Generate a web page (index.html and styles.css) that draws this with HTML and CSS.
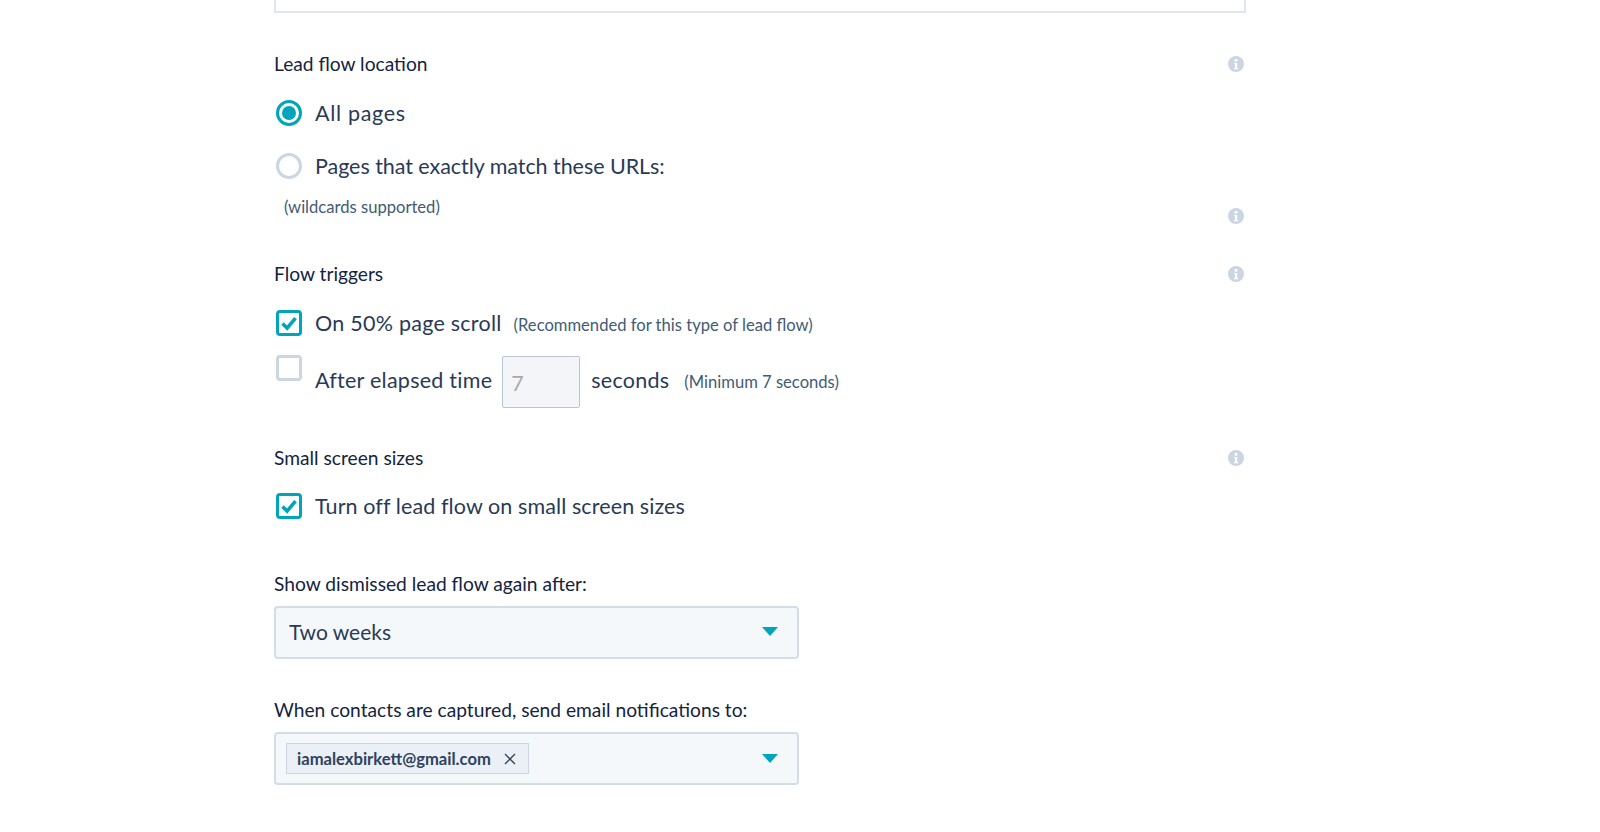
FILE: index.html
```html
<!DOCTYPE html>
<html lang="en">
<head>
  <meta charset="UTF-8">
  <title>Lead flow options</title>
  <link rel="stylesheet" href="styles.css">
</head>
<body>

<svg width="0" height="0" class="defs">
  <symbol id="info" viewBox="0 0 16 16">
    <circle cx="8" cy="8" r="8" fill="#cbd6e2"/>
    <circle cx="8" cy="4.2" r="1.5" fill="#fff"/>
    <path d="M6 6.9h3.2v5h1v1.3H6v-1.3h1v-3.7H6z" fill="#fff"/>
  </symbol>
  <symbol id="tick" viewBox="0 0 26 26">
    <path d="M6.5 13.5l4.6 4.6 8.4-10" fill="none" stroke="#00a4bd" stroke-width="3.6"/>
  </symbol>
  <symbol id="caret" viewBox="0 0 16 9">
    <path d="M0 0h16L8 9z" fill="#00a4bd"/>
  </symbol>
</svg>

<div class="form">
  <div class="top-box"></div>

  <section class="group location">
    <div class="group-head">
      <span class="label">Lead flow location</span>
      <svg class="info"><use href="#info"/></svg>
    </div>
    <div class="option first">
      <span class="radio checked"></span>
      <span class="option-text">All pages</span>
    </div>
    <div class="option second">
      <span class="radio"></span>
      <span class="option-text">Pages that exactly match these URLs:</span>
    </div>
    <div class="group-head wild">
      <span class="hint">(wildcards supported)</span>
      <svg class="info"><use href="#info"/></svg>
    </div>
  </section>

  <section class="group triggers">
    <div class="group-head">
      <span class="label">Flow triggers</span>
      <svg class="info"><use href="#info"/></svg>
    </div>
    <div class="option first">
      <span class="check checked"><svg><use href="#tick"/></svg></span>
      <span class="option-text">On 50% page scroll</span>
      <span class="hint rec">(Recommended for this type of lead flow)</span>
    </div>
    <div class="option elapsed">
      <span class="check"></span>
      <span class="option-text">After elapsed time</span>
      <span class="num-input">7</span>
      <span class="option-text seconds">seconds</span>
      <span class="hint min">(Minimum 7 seconds)</span>
    </div>
  </section>

  <section class="group small-screens">
    <div class="group-head">
      <span class="label">Small screen sizes</span>
      <svg class="info"><use href="#info"/></svg>
    </div>
    <div class="option first">
      <span class="check checked"><svg><use href="#tick"/></svg></span>
      <span class="option-text">Turn off lead flow on small screen sizes</span>
    </div>
  </section>

  <section class="group dismissed">
    <div class="label">Show dismissed lead flow again after:</div>
    <div class="select">
      <span class="select-value">Two weeks</span>
      <svg class="caret"><use href="#caret"/></svg>
    </div>
  </section>

  <section class="group notify">
    <div class="label">When contacts are captured, send email notifications to:</div>
    <div class="select tags">
      <span class="tag">iamalexbirkett@gmail.com
        <svg class="tag-x" viewBox="0 0 12 12"><path d="M1 1l10 10M11 1L1 11" stroke="#33475b" stroke-width="1.4" fill="none"/></svg>
      </span>
      <svg class="caret"><use href="#caret"/></svg>
    </div>
  </section>
</div>

</body>
</html>
```
FILE: styles.css
```css
body {
    margin: 0;
    background-color: #fff;
    color: #33475b;
    font-family: Lato, "Open Sans", sans-serif;
    overflow: hidden;
}
.defs {
    position: absolute;
}
.form {
    width: 972px;
    margin-left: 274px;
}
.top-box {
    height: 13px;
    box-sizing: border-box;
    border: 2px solid #e1e5ee;
    border-top: 0;
}
.group-head {
    display: flex;
    justify-content: space-between;
    align-items: center;
    padding-right: 2px;
    height: 24px;
}
.label {
    font-size: 19.2px;
    font-weight: 400;
    line-height: 24px;
    color: #14233f;
}
.info {
    width: 16px;
    height: 16px;
}
.option {
    display: flex;
    align-items: center;
    height: 28px;
}
.option-text {
    font-size: 21.5px;
    line-height: 28px;
    letter-spacing: 0.1px;
    color: #2a3a56;
    margin-left: 13px;
}
.radio,
.check {
    flex: none;
    width: 26px;
    height: 26px;
    margin-left: 2px;
    box-sizing: border-box;
    border: 3px solid #cbd6e2;
    background-color: #fff;
    display: flex;
}
.radio {
    border-radius: 50%;
}
.radio.checked {
    border-color: #00a4bd;
    align-items: center;
    justify-content: center;
}
.radio.checked::after {
    content: "";
    width: 14px;
    height: 14px;
    border-radius: 50%;
    background-color: #00a4bd;
}
.check {
    border-radius: 4px;
}
.check.checked {
    border-color: #00a4bd;
}
.check svg {
    width: 26px;
    height: 26px;
    margin: -3px;
}
.hint {
    font-size: 16.6px;
    color: #425b76;
}

/* location */
.location {
    margin-top: 39px;
}
.location .first {
    margin-top: 23px;
}
.location .first .option-text {
    letter-spacing: 0.7px;
}
.location .second {
    margin-top: 25px;
}
.location .second .option-text {
    letter-spacing: -0.05px;
}
.wild {
    margin-top: 15px;
    padding-left: 10px;
    height: 24px;
}
.wild .info {
    margin-top: 18px;
}

/* triggers */
.triggers {
    margin-top: 43px;
}
.triggers .first {
    margin-top: 23px;
}
.triggers .option-text {
    letter-spacing: 0.25px;
}
.rec {
    margin-left: 12px;
    margin-top: 3px;
}
.elapsed {
    margin-top: 19px;
    height: 51px;
    align-items: flex-start;
}
.elapsed .check {
    margin-top: -1px;
}
.elapsed .option-text {
    margin-top: 10px;
}
.elapsed .num-input {
    width: 78px;
    height: 52px;
    box-sizing: border-box;
    margin-left: 10px;
    padding: 12px 8px;
    border: 1px solid #b9c5d3;
    border-radius: 2px;
    background-color: #f3f5f9;
    font-size: 21.5px;
    line-height: 28px;
    color: #a9a9a9;
}
.elapsed .seconds {
    margin-left: 11px;
}
.min {
    margin-left: 15px;
    margin-top: 16px;
}

/* small screen */
.small-screens {
    margin-top: 39px;
}
.small-screens .first {
    margin-top: 22px;
}

/* selects */
.dismissed {
    margin-top: 52px;
}
.notify {
    margin-top: 39px;
}
.select {
    display: flex;
    justify-content: space-between;
    align-items: center;
    width: 525px;
    height: 53px;
    box-sizing: border-box;
    margin-top: 10px;
    padding: 0 19px 2px 13px;
    border: 2px solid #d3dde8;
    border-radius: 4px;
    background-color: #f5f8fa;
}
.select-value {
    font-size: 21px;
    color: #2a3a56;
}
.caret {
    width: 16px;
    height: 9px;
}
.tags {
    padding-left: 10px;
    padding-bottom: 0;
}
.tag {
    display: flex;
    align-items: center;
    gap: 13px;
    height: 31px;
    box-sizing: border-box;
    padding: 0 12px 0 10px;
    border: 1px solid #cbd6e2;
    background-color: #eaf0f6;
    font-size: 16.6px;
    font-weight: 700;
    color: #2f4260;
}
.tag-x {
    width: 12px;
    height: 12px;
}
```
